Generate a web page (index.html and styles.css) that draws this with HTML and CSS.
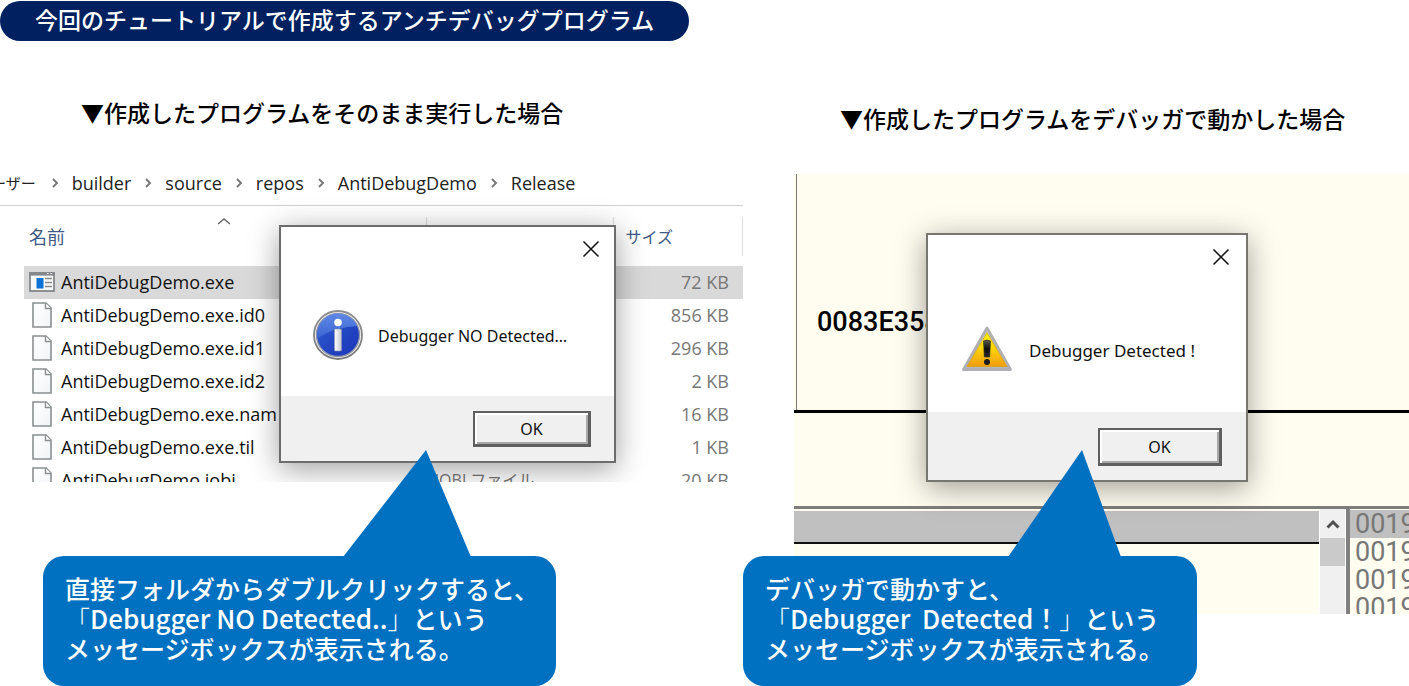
FILE: index.html
```html
<!DOCTYPE html>
<html lang="ja">
<head>
<meta charset="utf-8">
<title>アンチデバッグプログラム</title>
<link rel="stylesheet" href="styles.css">
</head>
<body>
<svg class="defs" width="0" height="0" aria-hidden="true">
  <defs>
    <linearGradient id="page" x1="0" y1="0" x2="1" y2="1"><stop offset="0" stop-color="#fff"/><stop offset="1" stop-color="#f1f4f7"/></linearGradient>
    <linearGradient id="ring" x1="0" y1="0" x2="0" y2="1"><stop offset="0" stop-color="#8f8f8f"/><stop offset="1" stop-color="#7a7a7a"/></linearGradient>
    <linearGradient id="ball" x1="0" y1="0" x2="1" y2="1"><stop offset="0" stop-color="#2f5fd0"/><stop offset="1" stop-color="#1a32b8"/></linearGradient>
    <linearGradient id="shine" x1="0" y1="0" x2="0" y2="1"><stop offset="0" stop-color="#5f88e6"/><stop offset="1" stop-color="#3c66d4"/></linearGradient>
    <linearGradient id="stem" x1="0" y1="0" x2="1" y2="0"><stop offset="0" stop-color="#fff"/><stop offset="1" stop-color="#c4c8d0"/></linearGradient>
    <linearGradient id="amber" x1="0" y1="0" x2="0" y2="1"><stop offset="0" stop-color="#fdf500"/><stop offset=".5" stop-color="#fbd20a"/><stop offset="1" stop-color="#f09c10"/></linearGradient>
    <linearGradient id="silver" x1="0" y1="0" x2="0" y2="1"><stop offset="0" stop-color="#dcdcdc"/><stop offset="1" stop-color="#b4b4b8"/></linearGradient>
    <linearGradient id="bang" x1="0" y1="0" x2="0" y2="1"><stop offset="0" stop-color="#5a5a50"/><stop offset=".5" stop-color="#111"/><stop offset="1" stop-color="#26262a"/></linearGradient>
    <symbol id="doc" viewBox="0 0 20 26">
      <path d="M1 1h13l5 5v19H1z" fill="url(#page)" stroke="#8b8f8f" stroke-width="1.6"/>
      <path d="M13.5 1v5.500H19" fill="#fff" stroke="#8b8f8f" stroke-width="1.400"/>
    </symbol>
    <symbol id="chev" viewBox="0 0 8 10"><path d="M2 1l4 4-4 4" fill="none" stroke="#777" stroke-width="1.900"/></symbol>
    <symbol id="close" viewBox="0 0 18 18"><path d="M1.500 1.500l15 15M16.500 1.500l-15 15" fill="none" stroke="#111" stroke-width="1.500"/></symbol>
  </defs>
</svg>

<h1 class="title">今回のチュートリアルで作成するアンチデバッグプログラム</h1>

<main class="compare">
  <section class="case case-direct">
    <h2 class="caption">▼作成したプログラムをそのまま実行した場合</h2>
    <div class="explorer">
      <nav class="crumbs">
        <span class="cut">ーザー</span><svg class="chev"><use href="#chev"/></svg>
        <span>builder</span><svg class="chev"><use href="#chev"/></svg>
        <span>source</span><svg class="chev"><use href="#chev"/></svg>
        <span>repos</span><svg class="chev"><use href="#chev"/></svg>
        <span>AntiDebugDemo</span><svg class="chev"><use href="#chev"/></svg>
        <span>Release</span>
      </nav>
      <table class="files">
        <colgroup><col class="c-name"><col class="c-type"><col class="c-size"></colgroup>
        <thead>
          <tr>
            <th><div class="head">名前<svg class="sort" viewBox="0 0 14 8"><path d="M1 7l6-5 6 5" fill="none" stroke="#666" stroke-width="1.500"/></svg></div></th>
            <th><div class="head"></div></th>
            <th><div class="head head-size">サイズ</div></th>
          </tr>
        </thead>
        <tbody>
          <tr class="selected">
            <td><div class="file"><svg class="icon" viewBox="0 0 26 20"><rect x="1" y="1" width="24" height="18" fill="#f7f8f8" stroke="#84888a" stroke-width="1.800"/><path d="M0 2h26" stroke="#84888a" stroke-width="3.200"/><path d="M18 1.500h1.500M21.500 1.500H23" stroke="#fff"/><rect x="7.500" y="6" width="7" height="10.500" fill="#0b72d8"/><path d="M16 6.500h7M16 10.500h7M16 14.500h7" stroke="#8a8a8a" stroke-width="1.500"/></svg>AntiDebugDemo.exe</div></td><td></td><td class="size">72 KB</td>
          </tr>
          <tr><td><div class="file"><svg class="icon doc"><use href="#doc"/></svg>AntiDebugDemo.exe.id0</div></td><td></td><td class="size">856 KB</td></tr>
          <tr><td><div class="file"><svg class="icon doc"><use href="#doc"/></svg>AntiDebugDemo.exe.id1</div></td><td></td><td class="size">296 KB</td></tr>
          <tr><td><div class="file"><svg class="icon doc"><use href="#doc"/></svg>AntiDebugDemo.exe.id2</div></td><td></td><td class="size">2 KB</td></tr>
          <tr><td><div class="file"><svg class="icon doc"><use href="#doc"/></svg>AntiDebugDemo.exe.nam</div></td><td></td><td class="size">16 KB</td></tr>
          <tr><td><div class="file"><svg class="icon doc"><use href="#doc"/></svg>AntiDebugDemo.exe.til</div></td><td></td><td class="size">1 KB</td></tr>
          <tr><td><div class="file"><svg class="icon doc"><use href="#doc"/></svg>AntiDebugDemo.iobj</div></td><td class="type">IOBJ ファイル</td><td class="size">20 KB</td></tr>
        </tbody>
      </table>
      <div class="dialog dialog-info" role="dialog" aria-label="Debugger NO Detected">
        <button class="close" aria-label="閉じる"><svg><use href="#close"/></svg></button>
        <div class="message">
          <svg class="badge" viewBox="0 0 50 50">
            <circle cx="25" cy="25" r="24" fill="#f4f4f4" stroke="url(#ring)" stroke-width="1.800"/>
            <circle cx="25" cy="25" r="21.500" fill="url(#ball)" stroke="#8d94a8" stroke-width="1.400"/>
            <path d="M4.500 28A20.800 20.800 0 0 1 44 16Q22 17 4.500 28z" fill="url(#shine)"/>
            <circle cx="25" cy="12.500" r="3.800" fill="#fff"/>
            <rect x="21.500" y="19" width="7" height="22" rx="1" fill="url(#stem)" stroke="#8a92b0" stroke-width=".6"/>
          </svg>
          <p>Debugger NO Detected…</p>
        </div>
        <div class="actions"><button class="ok">OK</button></div>
      </div>
    </div>
    <div class="callout callout-direct">
      <svg class="tail" viewBox="0 0 128 107" preserveAspectRatio="none"><path d="M0 107L83 0l45 107z"/></svg>
      <p>直接フォルダからダブルクリックすると、<br><span class="bracket">「</span><span class="latin">Debugger NO Detected..</span><span class="bracket">」</span>という<br>メッセージボックスが表示される。</p>
    </div>
  </section>

  <section class="case case-debugger">
    <h2 class="caption">▼作成したプログラムをデバッガで動かした場合</h2>
    <div class="debugger">
      <div class="code-pane"><span>0083E358</span></div>
      <div class="info-pane"></div>
      <div class="lower">
        <div class="dump"><div class="dump-head"></div></div>
        <div class="scroll">
          <svg class="up" viewBox="0 0 14 10"><path d="M1.500 8.500L7 3l5.500 5.500" fill="none" stroke="#505050" stroke-width="3"/></svg>
          <div class="thumb"></div>
        </div>
        <ul class="stack"><li>0019</li><li>0019</li><li>0019</li><li>0019</li></ul>
      </div>
    </div>
    <div class="dialog dialog-warn" role="dialog" aria-label="Debugger Detected">
      <button class="close" aria-label="閉じる"><svg><use href="#close"/></svg></button>
      <div class="message">
        <svg class="badge" viewBox="0 0 50 46">
          <path d="M25 2L48.500 43.500H1.500z" fill="url(#silver)" stroke="#b0b0b4" stroke-width="2.800" stroke-linejoin="round"/>
          <path d="M25 6.500L45 40.500H5z" fill="url(#amber)" stroke="#d8a414" stroke-width=".8"/>
          <path d="M21.500 15q3.500-2 7 0l-.8 16h-5.400z" fill="url(#bang)" stroke="#2a2a22" stroke-width=".6"/>
          <circle cx="25" cy="36" r="3" fill="#1c1c20"/>
        </svg>
        <p>Debugger Detected !</p>
      </div>
      <div class="actions"><button class="ok">OK</button></div>
    </div>
    <div class="callout callout-debugger">
      <svg class="tail" viewBox="0 0 113 107" preserveAspectRatio="none"><path d="M0 107L74 0l39 107z"/></svg>
      <p>デバッガで動かすと、<br><span class="bracket">「</span><span class="latin">Debugger&nbsp; Detected！</span><span class="bracket">」</span>という<br>メッセージボックスが表示される。</p>
    </div>
  </section>
</main>
</body>
</html>
```
FILE: styles.css
```css
* { box-sizing: border-box; }

body {
  margin: 0;
  padding: 1px 0 72px;
  background: #fff;
  color: #000;
  font-family: "Open Sans", "Noto Sans CJK JP", sans-serif;
}

h1, h2, p, ul { margin: 0; padding: 0; font-size: inherit; }
button { padding: 0; font: inherit; color: inherit; }
svg { display: block; flex: none; }
.defs { position: absolute; }

.title, .caption, .callout {
  font-family: "Noto Sans CJK JP", sans-serif;
  font-weight: 500;
}

.title {
  width: fit-content;
  padding: 0 35px 4px;
  border-radius: 20px;
  background: #002060;
  color: #fff;
  font-size: 23px;
  line-height: 36px;
}

.compare {
  display: grid;
  grid-template-columns: 743fr 615fr;
  column-gap: 51px;
  align-items: start;
}

.case { position: relative; min-width: 0; }

.caption { font-size: 23px; line-height: 32px; white-space: nowrap; }
.case-direct .caption { padding: 55px 0 37px 81px; }
.case-debugger .caption { padding: 61px 0 40px 46px; }

/* Explorer window */
.explorer { position: relative; height: 317px; overflow: hidden; font-size: 18px; }

.crumbs {
  display: flex;
  align-items: center;
  gap: 13px;
  height: 41px;
  padding-bottom: 5px;
  border-bottom: 1px solid #d2d2d2;
  color: #222;
}
.cut { margin-left: -9px; padding-right: 2px; font-size: 15px; }
.chev { width: 8px; height: 10px; }

.files {
  width: calc(100% - 24px);
  margin-left: 24px;
  border-collapse: collapse;
  table-layout: fixed;
  color: #111;
}
.c-name { width: 56%; }
.c-type { width: 26%; }
.files th { height: 60px; padding: 0; font-weight: 400; text-align: left; }
.head {
  position: relative;
  height: 39px;
  border-right: 1px solid #ddd;
  color: #3f5a85;
  line-height: 40px;
}
th:first-child .head { padding-left: 5px; }
.head-size { padding-left: 12px; font-size: 16px; }
.sort { position: absolute; top: 0; left: 193px; width: 14px; height: 8px; }
.files td { height: 33px; padding: 0 0 2px; white-space: nowrap; line-height: 30px; }
.selected { background: #d9d9d9; }
.file { display: flex; align-items: center; gap: 6px; padding-left: 5px; }
.icon { width: 26px; height: 20px; }
.doc { height: 26px; }
.files .type { padding-left: 8px; color: #777; font-size: 16px; }
.files .size { padding-right: 14px; color: #777; text-align: right; }

/* Message boxes */
.dialog {
  position: absolute;
  display: flex;
  flex-direction: column;
  border: 2px solid #6c6c6c;
  background: #fff;
  color: #111;
  font-family: "Noto Sans", sans-serif;
  box-shadow: 0 6px 28px rgba(0, 0, 0, .38);
}
.dialog-info { top: 60px; left: 279px; width: 337px; height: 238px; font-size: 16px; }
.dialog-warn { top: 192px; left: 132px; width: 322px; height: 249px; border-color: #77776f; font-size: 17px; }

.close {
  align-self: flex-end;
  width: 18px;
  height: 18px;
  margin: 13px 14px 0 0;
  border: 0;
  background: none;
}
.dialog-warn .close { margin-right: 16px; }
.close svg { width: 18px; height: 18px; }
.message { display: flex; flex: 1; align-items: center; gap: 15px; padding: 15px 0 0 32px; white-space: nowrap; }
.badge { width: 50px; }
.message p { padding-top: 2px; }
.dialog-warn .message { gap: 17px; padding: 20px 0 0 34px; }

.actions {
  display: flex;
  justify-content: flex-end;
  align-items: flex-start;
  height: 65px;
  padding: 15px 23px 0 0;
  background: #f0f0f0;
}
.dialog-warn .actions { height: 68px; padding-top: 16px; padding-right: 24px; }
.ok {
  width: 118px;
  height: 36px;
  border: 2px solid #5f5f5f;
  border-right-width: 3px;
  border-bottom-width: 3px;
  background: #f0f0f0;
  box-shadow: inset 2px 2px #fff, inset -2px -2px #a8a8a8;
  font-size: 16px;
}
.dialog-warn .ok { width: 124px; height: 38px; }

/* Debugger window */
.debugger { height: 440px; overflow: hidden; background: #fffdf0; }
.code-pane {
  display: flex;
  height: 239px;
  margin-left: 2px;
  padding: 128px 0 0 20px;
  border-left: 1px solid #777;
  font: 500 27px/40px Roboto, sans-serif;
}
.info-pane { height: 99px; margin-top: -3px; border-top: 3px solid #000; border-bottom: 3px solid #7d7d79; }
.lower { display: grid; grid-template-columns: 1fr 27px 63px; height: 105px; }
.dump { padding-top: 2px; }
.dump-head { height: 33px; border-bottom: 2px solid #111; background: #c0c0c0; }
.scroll { border: solid #fff; border-width: 0 1px; background: #f0f0f0; }
.up { width: 14px; height: 10px; margin: 10px auto 9px; }
.thumb { height: 28px; background: #cacaca; }
.stack {
  overflow: hidden;
  padding-top: 1px;
  border-left: 4px solid #808080;
  color: #777;
  font: 27px/28px Roboto, sans-serif;
  list-style: none;
}
.stack li { padding-left: 5px; }
.stack li:first-child { background: #c0c0c0; }

/* Callouts */
.callout {
  position: absolute;
  top: 515px;
  height: 130px;
  padding: 17px 0 0 22px;
  border-radius: 21px;
  background: #0070c0;
  color: #fff;
  font-size: 25px;
  line-height: 30px;
  white-space: nowrap;
}
.callout-direct { left: 43px; width: 513px; }
.callout-debugger { left: -51px; width: 454px; }
.bracket { font-weight: 300; }
.latin { font-size: 26px; }
.tail { position: absolute; top: -106px; height: 107px; fill: #0070c0; }
.callout-direct .tail { left: 300px; width: 128px; }
.callout-debugger .tail { left: 265px; width: 113px; }
```
